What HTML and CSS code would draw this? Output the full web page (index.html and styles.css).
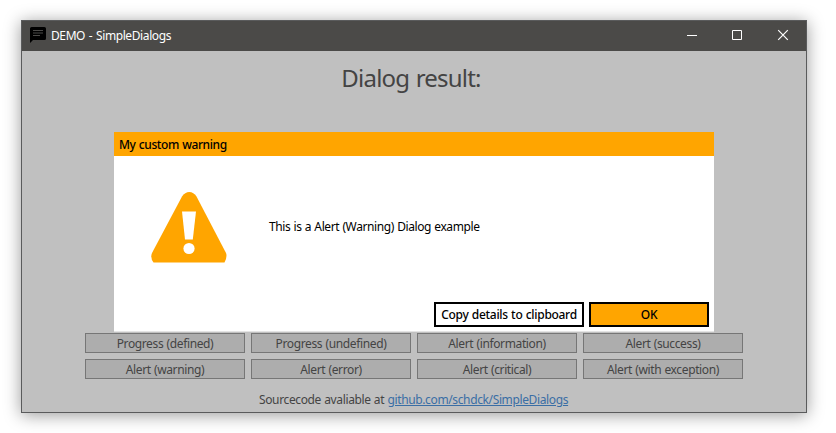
FILE: index.html
```html
<!DOCTYPE html>
<html lang="en">
<head>
<meta charset="utf-8">
<title>DEMO - SimpleDialogs</title>
<link rel="stylesheet" href="styles.css">
</head>
<body>
<div class="window">
  <header class="titlebar">
    <svg class="app-icon" width="16" height="16" viewBox="0 0 16 16"><path d="M1.600 0h12.800A1.600 1.600 0 0 1 16 1.600v9.800a1.600 1.600 0 0 1-1.600 1.600H3L0 16V1.600A1.600 1.600 0 0 1 1.600 0Z" fill="#000"/><path d="M3 3.500h10M3 6h10M3 8.500h7" stroke="#4b4a48" stroke-width="1.200"/></svg>
    <span class="app-title">DEMO - SimpleDialogs</span>
    <div class="controls">
      <svg width="46" height="30" viewBox="0 0 46 30"><path d="M18 14.500h10" stroke="#fff"/></svg>
      <svg width="46" height="30" viewBox="0 0 46 30"><path d="M17.500 9.500h9v9h-9z" fill="none" stroke="#fff"/></svg>
      <svg width="46" height="30" viewBox="0 0 46 30"><path d="M17.200 9.200l9.600 9.600M26.800 9.200l-9.600 9.600" stroke="#fff" stroke-width="1.200"/></svg>
    </div>
  </header>
  <main class="content">
    <h1 class="result"><span>Dialog result:</span></h1>
    <div class="actions">
      <button>Progress (defined)</button>
      <button>Progress (undefined)</button>
      <button>Alert (information)</button>
      <button>Alert (success)</button>
      <button>Alert (warning)</button>
      <button>Alert (error)</button>
      <button>Alert (critical)</button>
      <button>Alert (with exception)</button>
    </div>
    <footer class="source"><span>Sourcecode avaliable at </span><a>github.com/schdck/SimpleDialogs</a></footer>
  </main>
  <section class="dialog">
    <h2 class="dialog-title"><span>My custom warning</span></h2>
    <div class="dialog-body">
      <svg class="warning" width="76" height="71" viewBox="0 0 76 71"><path d="M31 4.500Q34 0 38.300 0T45.500 4.500L75 61Q76.500 65 73.500 70.500H2.500Q-1 66 1 61Z" fill="#ffa500"/><path d="M31 19.500h14l-3.200 28h-7.800z" fill="#fff"/><circle cx="38" cy="56.500" r="5.600" fill="#fff"/></svg>
      <p class="message">This is a Alert (Warning) Dialog example</p>
    </div>
    <div class="dialog-actions">
      <button class="copy">Copy details to clipboard</button>
      <button class="ok">OK</button>
    </div>
  </section>
</div>
</body>
</html>
```
FILE: styles.css
```css
* { box-sizing: border-box; }
body {
  margin: 0;
  padding: 20px 0 0 21px;
  height: 433px;
  overflow: hidden;
  background: #fff;
  font: 12px/16px "Noto Sans", "Open Sans", sans-serif;
  white-space: nowrap;
}
button { font: inherit; letter-spacing: inherit; word-spacing: inherit; padding: 0; margin: 0; border-radius: 0; white-space: nowrap; }
.window {
  position: relative;
  width: 786px;
  height: 393px;
  display: flex;
  flex-direction: column;
  background: #c0c0c0;
  border: 1px solid #5a5b5c;
  box-shadow: 0 2px 16px rgba(0, 0, 0, .4);
}
.titlebar {
  height: 30px;
  flex: none;
  display: flex;
  align-items: center;
  padding-left: 8px;
  background: #4b4a48;
  color: #fff;
}
.app-icon { margin-right: 5px; margin-top: -3px; }
.app-title { letter-spacing: -.4px; word-spacing: 1px; }
.controls { display: flex; margin: 0 -1px 0 auto; }
.content {
  flex: 1;
  display: flex;
  flex-direction: column;
  color: #444;
  letter-spacing: -.37px;
  word-spacing: .5px;
}
.result {
  margin: 10px 0 0;
  padding-right: 6px;
  height: 34px;
  font-size: 24px;
  line-height: 34px;
  font-weight: 400;
  letter-spacing: -.8px;
  word-spacing: 1px;
  text-align: center;
}
.actions {
  display: grid;
  grid-template-columns: repeat(4, 160px);
  grid-auto-rows: 20px;
  gap: 6px;
  margin: 238px 0 0 63px;
}
.actions button {
  padding-top: 1px;
  border: 1px solid #767676;
  background: #adadad;
  color: #444;
  line-height: 17px;
}
.source { margin: 13px 0 0 237px; white-space: pre; }
.source a { color: #3a6ea5; text-decoration: underline; }
.dialog {
  position: absolute;
  left: 92px;
  top: 111px;
  width: 600px;
  height: 200px;
  display: flex;
  flex-direction: column;
  background: #fff;
  border-bottom: 1px solid #e4e4e4;
  color: #000;
  letter-spacing: -.4px;
  word-spacing: .5px;
}
.dialog-title {
  margin: 0;
  height: 24px;
  padding-left: 5px;
  background: #ffa500;
  font-size: 12px;
  line-height: 25px;
  font-weight: 500;
}
.dialog-body {
  flex: 1;
  display: flex;
  align-items: center;
  padding: 0 0 3px 37px;
}
.warning { flex: none; margin-right: 42px; }
.message { margin: 0 0 2px; }
.dialog-actions {
  display: flex;
  justify-content: flex-end;
  gap: 5px;
  padding: 0 5px 4px;
}
.dialog-actions button {
  height: 25px;
  border: 2px solid #000;
  color: #000;
  font-weight: 500;
  letter-spacing: -.3px;
}
.copy { width: 150px; background: #fff; }
.ok { width: 120px; background: #ffa500; }
```
